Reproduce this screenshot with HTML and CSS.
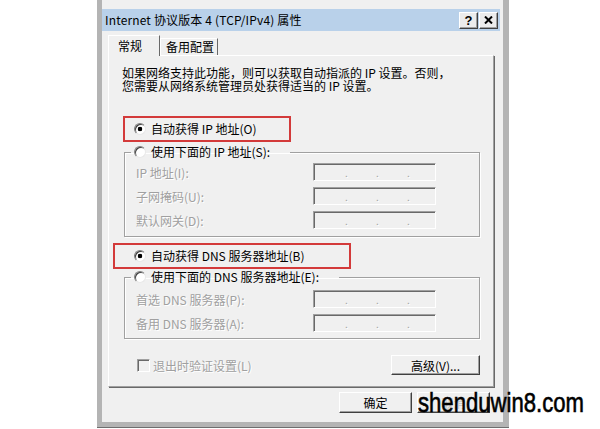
FILE: index.html
```html
<!DOCTYPE html>
<html>
  <head>
    <meta charset="UTF-8"/>
    <title>Internet 协议版本 4 (TCP/IPv4) 属性</title>
    <link rel="stylesheet" href="styles.css">
  </head>
  <body>
    <div class="window">
      <div class="titlebar">
        <span class="title">Internet 协议版本 4 (TCP/IPv4) 属性</span>
        <span class="capbtn">?</span>
        <span class="capbtn">
          <svg width="9" height="8" viewBox="0 0 9 8"><path d="M1 0.5 L8 7.5 M8 0.5 L1 7.5" stroke="#000" stroke-width="2"/></svg>
        </span>
      </div>

      <div class="tabs">
        <div class="tab active">常规</div>
        <div class="tab">备用配置</div>
      </div>

      <div class="panel">
        <p class="intro">如果网络支持此功能，则可以获取自动指派的 IP 设置。否则，<br>您需要从网络系统管理员处获得适当的 IP 设置。</p>

        <div class="mark mark-ip">
          <span class="radio checked">自动获得 IP 地址(O)</span>
        </div>
        <fieldset class="group">
          <legend><span class="radio">使用下面的 IP 地址(S):</span></legend>
          <div class="field"><span>IP 地址(I):</span><span class="ipbox"><i>.</i><i>.</i><i>.</i></span></div>
          <div class="field"><span>子网掩码(U):</span><span class="ipbox"><i>.</i><i>.</i><i>.</i></span></div>
          <div class="field"><span>默认网关(D):</span><span class="ipbox"><i>.</i><i>.</i><i>.</i></span></div>
        </fieldset>

        <div class="mark mark-dns">
          <span class="radio checked">自动获得 DNS 服务器地址(B)</span>
        </div>
        <fieldset class="group group-dns">
          <legend><span class="radio">使用下面的 DNS 服务器地址(E):</span></legend>
          <div class="field"><span>首选 DNS 服务器(P):</span><span class="ipbox"><i>.</i><i>.</i><i>.</i></span></div>
          <div class="field"><span>备用 DNS 服务器(A):</span><span class="ipbox"><i>.</i><i>.</i><i>.</i></span></div>
        </fieldset>

        <div class="options">
          <span class="check">退出时验证设置(L)</span>
          <span class="button wide">高级(V)...</span>
        </div>
      </div>

      <div class="actions">
        <span class="button">确定</span>
        <span class="button">取消</span>
      </div>
    </div>

    <div class="watermark">shenduwin8.com</div>
  </body>
</html>
```

FILE: styles.css
```css
body {
  margin: 0;
  height: 429px;
  overflow: hidden;
  position: relative;
  background: #fff;
  font-family: "Noto Sans CJK SC", sans-serif;
  font-size: 12px;
  color: #000;
}
.window {
  margin-left: 97px;
  width: 412px;
  height: 427px;
  box-sizing: border-box;
  border: 5px solid #b4b4b4;
  border-top: 0;
  border-right-width: 6px;
  box-shadow: 0 1px 0 #6e6e6e;
  background: #f0f0f0;
  padding-top: 9px;
}
.titlebar {
  display: flex;
  align-items: center;
  gap: 1px;
  height: 22px;
  margin-right: 3px;
  padding: 0 2px 0 3px;
  background: #b9d1ea;
}
.title {
  flex: 1;
  line-height: 14px;
  letter-spacing: 0.15px;
}
.capbtn {
  display: flex;
  align-items: center;
  justify-content: center;
  width: 19px;
  height: 17px;
  box-sizing: border-box;
  border: 1px solid;
  border-color: #fff #404040 #404040 #fff;
  box-shadow: inset -1px -1px 0 #a0a0a0;
  background: #ececec;
  font-family: "Liberation Sans", sans-serif;
  font-weight: bold;
  font-size: 13px;
  line-height: 1;
}
.tabs {
  display: flex;
  align-items: flex-end;
  height: 20px;
  margin: 4px 0 0 6px;
}
.tab {
  height: 16px;
  line-height: 16px;
  padding: 0 3px 0 5px;
  border: 1px solid;
  border-color: #fff #696969 transparent #fff;
  border-bottom: 0;
}
.tab.active {
  position: relative;
  z-index: 1;
  height: 20px;
  line-height: 20px;
  margin-bottom: -1px;
  padding: 0 17px 0 9px;
  background: #f0f0f0;
}
.panel {
  width: 386px;
  height: 332px;
  box-sizing: border-box;
  margin-left: 6px;
  padding: 10px 13px 0 13px;
  border: 1px solid;
  border-color: #fff #a0a0a0 #a0a0a0 #fff;
  box-shadow: 1px 1px 0 #696969;
}
.intro {
  margin: 0;
  line-height: 13px;
  white-space: nowrap;
}
.mark {
  display: flex;
  align-items: center;
  height: 26px;
  box-sizing: border-box;
  border: 2px solid #d33a3a;
}
.mark-ip {
  width: 168px;
  margin: 24px 0 0 1px;
  padding-left: 9px;
}
.mark-dns {
  width: 238px;
  margin: 6px 0 0 -9px;
  padding-left: 19px;
}
.radio {
  display: inline-flex;
  align-items: center;
  gap: 5px;
  line-height: 14px;
  white-space: nowrap;
}
.radio::before {
  content: "";
  width: 12px;
  height: 12px;
  box-sizing: border-box;
  border-radius: 50%;
  border: 1px solid;
  border-color: #808080 #e8e8e8 #e8e8e8 #808080;
  box-shadow: inset 1px 1px 0 #404040;
  background: #fff;
}
.radio.checked::before {
  background: radial-gradient(circle, #000 0, #000 2px, #fff 2.6px);
}
.group {
  width: 356px;
  min-width: 0;
  box-sizing: border-box;
  margin: 3px 0 0 2px;
  padding: 3px 43px 7px 11px;
  border: 1px solid #a0a0a0;
  box-shadow: 1px 1px 0 #fff, inset 1px 1px 0 #fff;
}
.group-dns {
  margin-top: 1px;
  padding-top: 5px;
  padding-bottom: 6px;
}
.group legend {
  margin-left: -5px;
  padding: 0 20px 0 3px;
  line-height: 14px;
}
.field {
  display: flex;
  align-items: center;
  justify-content: space-between;
  height: 18px;
  color: #a0a0a0;
  text-shadow: 1px 1px 0 #fff;
}
.field + .field {
  margin-top: 6px;
}
.ipbox {
  display: flex;
  align-items: flex-end;
  gap: 28px;
  width: 123px;
  height: 18px;
  box-sizing: border-box;
  padding: 0 0 1px 31px;
  border: 1px solid;
  border-color: #a0a0a0 #fff #fff #a0a0a0;
  box-shadow: inset 1px 1px 0 #696969;
  font-size: 10px;
  line-height: 12px;
}
.ipbox i {
  font-style: normal;
  width: 3px;
}
.options {
  display: flex;
  align-items: center;
  justify-content: space-between;
  margin-top: 16px;
  padding-left: 15px;
}
.check {
  display: inline-flex;
  align-items: center;
  gap: 3px;
  color: #a0a0a0;
  text-shadow: 1px 1px 0 #fff;
}
.check::before {
  content: "";
  width: 13px;
  height: 13px;
  box-sizing: border-box;
  border: 1px solid;
  border-color: #a0a0a0 #fff #fff #a0a0a0;
  box-shadow: inset 1px 1px 0 #696969;
  background: #f0f0f0;
}
.button {
  display: flex;
  align-items: center;
  justify-content: center;
  width: 73px;
  height: 21px;
  box-sizing: border-box;
  border: 1px solid;
  border-color: #fff #404040 #404040 #fff;
  box-shadow: inset -1px -1px 0 #a0a0a0;
  background: #f0f0f0;
}
.button.wide {
  width: 89px;
  height: 20px;
}
.actions {
  display: flex;
  gap: 5px;
  margin-top: 5px;
  padding-left: 237px;
}
.actions .button + .button {
  color: #c8c8c8;
}
.watermark {
  position: absolute;
  left: 418px;
  top: 389px;
  font-family: "Liberation Sans", sans-serif;
  font-size: 28px;
  line-height: 1;
  color: #000;
  -webkit-text-stroke: 0.6px #000;
  transform: scaleX(0.79);
  transform-origin: left top;
}
```
